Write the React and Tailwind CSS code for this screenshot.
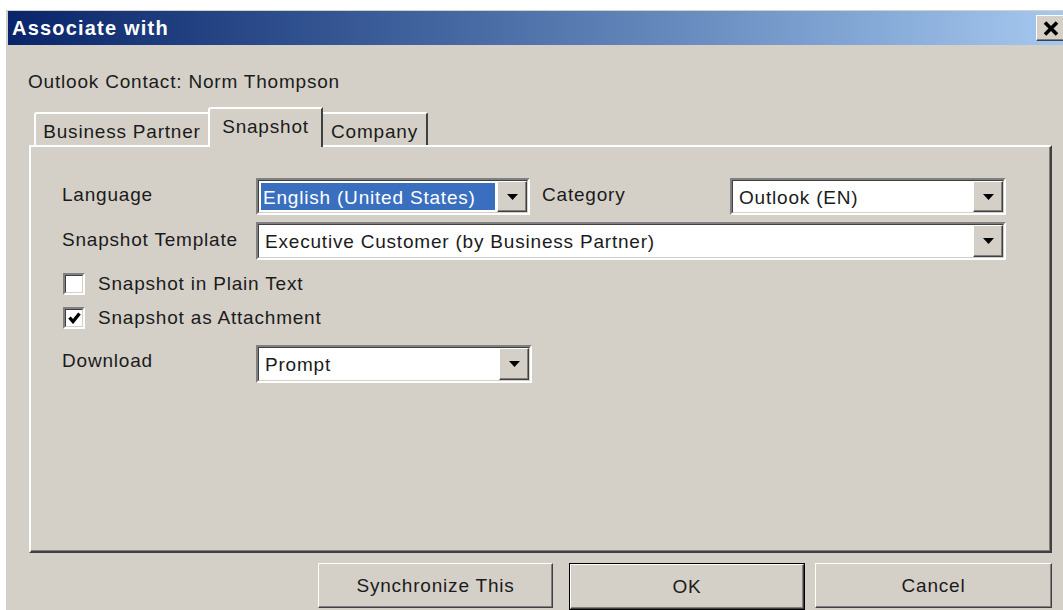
import { useState } from "react";

// classic Win32 sunken drop-down list
const Combo = ({ value, className, highlighted }) => (
  <div
    className={`flex border-2 border-t-[#808080] border-l-[#808080] border-b-white border-r-white ${className}`}
  >
    <div className="flex flex-1 border border-t-[#404040] border-l-[#404040] border-b-[#d4d0c8] border-r-[#d4d0c8] bg-white">
      <div className="flex flex-1 items-center p-[2px]">
        {highlighted ? (
          <span className="flex h-full flex-1 items-center bg-[#3a6fc0] pl-[2px] pt-[2px] text-white">{value}</span>
        ) : (
          <span className="pl-[4px] pt-[2px]">{value}</span>
        )}
      </div>
      <div className="flex w-[30px] items-center justify-center border border-t-white border-l-white border-b-[#404040] border-r-[#404040] bg-[#d4d0c8] shadow-[inset_-1px_-1px_0_#808080]">
        <svg width="11" height="6" viewBox="0 0 11 6">
          <path d="M0 0h11L5.5 6z" fill="#000" />
        </svg>
      </div>
    </div>
  </div>
);

const CheckBox = ({ label, checked, onToggle }) => (
  <div className="flex h-[23px] items-center" onClick={onToggle}>
    <div className="ml-[1px] flex h-[22px] w-[22px] border-2 border-t-[#808080] border-l-[#808080] border-b-white border-r-white">
      <div className="flex flex-1 items-center justify-center border border-t-[#404040] border-l-[#404040] border-b-[#d4d0c8] border-r-[#d4d0c8] bg-white">
        {checked && (
          <svg width="13" height="12" viewBox="0 0 13 12">
            <path d="M1.5 5.5l3.5 4L11.5 1.5" stroke="#000" strokeWidth="3.4" fill="none" />
          </svg>
        )}
      </div>
    </div>
    <span className="ml-[13px]">{label}</span>
  </div>
);

const Button = ({ children, className }) => (
  <button
    className={`flex h-[45px] items-center justify-center border border-t-white border-l-white border-b-[#404040] border-r-[#404040] bg-[#d4d0c8] shadow-[inset_-1px_-1px_0_#808080] ${className}`}
  >
    {children}
  </button>
);

export default function App() {
  const [plain, setPlain] = useState(false);
  const [attach, setAttach] = useState(true);

  return (
    <div className="h-[610px] w-[1063px] overflow-hidden bg-white pl-[5px] pt-[10px] font-['Liberation_Sans',Arial,sans-serif] text-[19px] leading-[22px] tracking-[0.8px] text-[#1b1b1b]">
      <div className="flex h-[600px] w-[1070px] flex-col border-l border-white bg-[#d4d0c8]">
        {/* Title bar */}
        <div className="mx-[2px] mt-[1px] flex h-[34px] items-center justify-between bg-linear-to-r from-[#0a246a] to-[#a6caf0] pl-[4px] pr-[7px]">
          <span className="text-[20px] font-bold tracking-[1.2px] text-white">Associate with</span>
          <div className="flex h-[26px] w-[30px] items-center justify-center border border-t-white border-l-white border-b-[#404040] border-r-[#404040] bg-[#d4d0c8] shadow-[inset_-1px_-1px_0_#808080]">
            <svg width="16" height="15" viewBox="0 0 16 15">
              <path d="M2 1.5l12 12M14 1.5l-12 12" stroke="#000" strokeWidth="3.6" />
            </svg>
          </div>
        </div>

        <div className="pl-[22px] pt-[26px]">Outlook Contact: Norm Thompson</div>

        <div className="ml-[23px] mt-[14px] w-[1023px]">
          {/* Tabs */}
          <div className="relative z-10 flex h-[40px] items-end pl-[5px]">
            <div className="mb-[2px] flex h-[33px] w-[174px] items-center justify-center rounded-tl-[3px] border-l-2 border-t-2 border-white pt-[5px]">
              Business Partner
            </div>
            <div className="flex h-[40px] w-[115px] items-center justify-center rounded-tl-[3px] border-l-2 border-r-2 border-t-2 border-l-white border-t-white border-r-[#404040] bg-[#d4d0c8] pb-[2px]">
              Snapshot
            </div>
            <div className="mb-[2px] flex h-[33px] w-[105px] items-center justify-center rounded-tr-[2px] border-r-2 border-t-2 border-t-white border-r-[#404040] pt-[5px]">
              Company
            </div>
          </div>

          {/* Tab page */}
          <div className="-mt-[2px] h-[408px] border-2 border-t-white border-l-white border-b-[#404040] border-r-[#404040] pl-[31px] pt-[31px] shadow-[inset_-1px_-1px_0_#808080]">
            <div className="flex h-[37px] items-center">
              <span className="w-[194px] -translate-y-[2px]">Language</span>
              <Combo className="h-[37px] w-[274px]" value="English (United States)" highlighted />
              <span className="ml-[12px] w-[188px] -translate-y-[2px]">Category</span>
              <Combo className="h-[37px] w-[276px]" value="Outlook (EN)" />
            </div>
            <div className="mt-[7px] flex h-[38px] items-center">
              <span className="w-[194px] -translate-y-[1px]">Snapshot Template</span>
              <Combo className="h-[38px] w-[750px]" value="Executive Customer (by Business Partner)" />
            </div>

            <div className="mt-[12px]">
              <CheckBox label="Snapshot in Plain Text" checked={plain} onToggle={() => setPlain(!plain)} />
            </div>
            <div className="mt-[11px]">
              <CheckBox label="Snapshot as Attachment" checked={attach} onToggle={() => setAttach(!attach)} />
            </div>

            <div className="mt-[16px] flex h-[38px] items-center">
              <span className="w-[194px] -translate-y-[3px]">Download</span>
              <Combo className="h-[38px] w-[276px]" value="Prompt" />
            </div>
          </div>

          {/* Dialog buttons */}
          <div className="mt-[10px] flex justify-end">
            <Button className="w-[235px]">Synchronize This</Button>
            <div className="ml-[16px] flex w-[236px] border border-black">
              <Button className="h-[43px] flex-1">OK</Button>
            </div>
            <Button className="ml-[10px] w-[237px]">Cancel</Button>
          </div>
        </div>
      </div>
    </div>
  );
}
